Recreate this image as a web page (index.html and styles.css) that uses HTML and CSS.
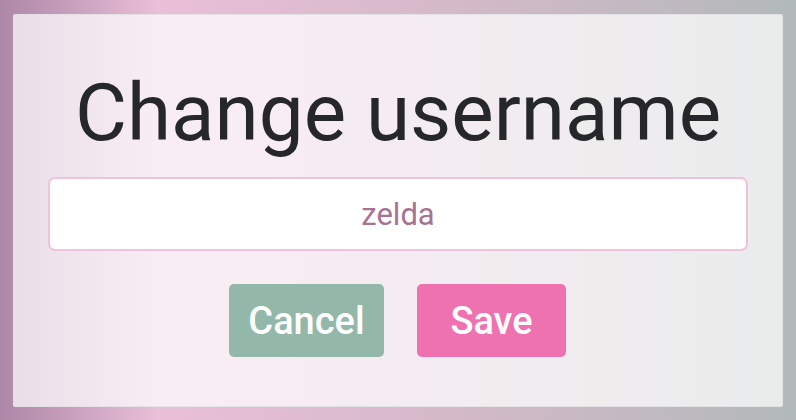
FILE: index.html
```html
<!DOCTYPE html>
<html>
<head>
<meta charset="utf-8">
<link rel="stylesheet" href="styles.css">
</head>
<body>
<div class="page">
  <div class="card">
    <h1 class="title">Change username</h1>
    <input class="field" type="text" value="zelda">
    <div class="actions">
      <button class="btn btn-cancel">Cancel</button>
      <button class="btn btn-save">Save</button>
    </div>
  </div>
</div>
</body>
</html>
```

FILE: styles.css
```css
html, body {
  margin: 0;
  padding: 0;
  width: 796px;
  height: 420px;
  overflow: hidden;
}
body {
  font-family: Roboto, "Liberation Sans", sans-serif;
  background: linear-gradient(90deg, #ad87a7 0%, #eabfd8 20%, #d2b9c8 60%, #b2b9bb 100%);
}
.page {
  box-sizing: border-box;
  height: 420px;
  padding: 14px 13px 13px 13px;
}
.card {
  box-sizing: border-box;
  height: 393px;
  background: rgba(255, 255, 255, 0.72);
  border: 1px solid rgba(225, 225, 230, 0.9);
  border-radius: 2px;
  display: flex;
  flex-direction: column;
  align-items: center;
  padding: 0 34px;
}
.title {
  margin: 51px 0 0 0;
  font-size: 80px;
  font-weight: 400;
  color: #25272b;
  line-height: 94px;
}
.field {
  box-sizing: border-box;
  width: 700px;
  height: 74px;
  margin-top: 17px;
  border: 2px solid #efc3de;
  border-radius: 7px;
  background: #fff;
  text-align: center;
  font-family: Roboto, "Liberation Sans", sans-serif;
  font-size: 31px;
  color: #a87392;
  outline: none;
}
.actions {
  display: flex;
  gap: 33px;
  margin-top: 33px;
  margin-right: 1px;
}
.btn {
  height: 73px;
  border: none;
  border-radius: 5px;
  color: #fff;
  font-family: Roboto, "Liberation Sans", sans-serif;
  font-size: 38px;
  font-weight: 500;
  padding: 0 10px;
}
.btn-cancel {
  background: #93b8aa;
  width: 155px;
}
.btn-save {
  background: #ee72b0;
  width: 149px;
}
```
